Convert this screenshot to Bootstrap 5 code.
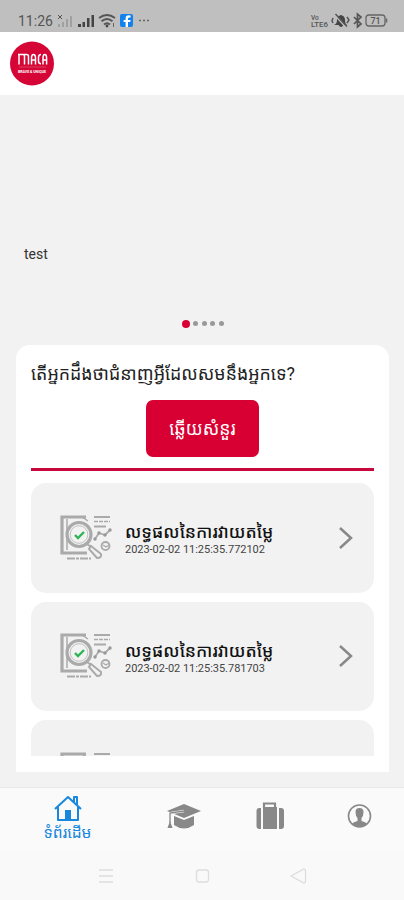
<!DOCTYPE html>
<html lang="km">
<head>
<meta charset="utf-8">
<meta name="viewport" content="width=device-width, initial-scale=1">
<title>MACA</title>
<link href="https://cdn.jsdelivr.net/npm/bootstrap@5.3.0/dist/css/bootstrap.min.css" rel="stylesheet">
<style>
body{background:#f2f2f2;font-family:Roboto,"Noto Sans Khmer","Khmer OS",sans-serif;color:#222;height:900px;overflow:hidden}
svg{display:block;flex:none}
.status{height:32px;background:#bfbfbf;padding:9px 16px 0 18px;color:#555}
.clock{font-size:14px;line-height:24px;width:35px;white-space:nowrap}
.topbar{height:63px;padding:9px 10px}
.slide{height:250px;padding:149px 24px 0}
.slide-text{font-size:14px;line-height:20px;color:#333}
.dots{margin-top:55px;gap:3.5px;height:9px;padding-left:1px}
.dots i{width:5px;height:5px;border-radius:50%;background:#999}
.dots i.on{width:8px;height:8px;background:#d80032}
.panel{margin:0 15px 0 16px;height:427px;border-radius:14px 14px 0 0;padding:0 15px}
.question{height:55px;line-height:57px;font-size:17.8px;white-space:nowrap;color:#222}
.answer{width:113px;height:57px;border-radius:7px;background:#d80032;border:0;color:#fff;font-size:17.8px;padding:2px 0 0;white-space:nowrap}
.answer:hover{background:#d80032;color:#fff}
.rule{height:3px;background:#c8083c;margin:11px 0 12px}
.results{height:273px;gap:9px}
.result{height:109.5px;flex:none;border-radius:15px;background:#f2f2f2;padding:0 20px 0 29px}
.result-title{font-size:17.4px;line-height:20px;color:#111;white-space:nowrap;font-weight:500}
.stamp{font-size:11px;line-height:12px;margin-top:2px;color:#444;white-space:nowrap;letter-spacing:-.03px}
.result-text{margin-left:13px;padding-top:3px}
.tabs{margin-top:15px;height:65px;background:#fafafa;border-top:1px solid #e9e9e9}
.tab-home{width:135px;color:#1888dc;padding-top:7px}
.tab-home span{font-size:15.6px;line-height:22px;white-space:nowrap}
.system{height:48px;background:#f9f9f9}
</style>
<script src="https://cdn.jsdelivr.net/npm/bootstrap@5.3.0/dist/js/bootstrap.bundle.min.js"></script>
</head>
<body>
<svg width="0" height="0" class="position-absolute">
<symbol id="report" viewBox="0 0 52 46">
<g fill="none" stroke="#aaa">
<path d="M26 2H2v36h25" stroke-width="3.200"/><path d="M7 4v31M22 2l6 4" stroke-width="1.500"/>
<circle cx="19" cy="19.500" r="12" stroke-width="3.200" fill="#f2f2f2"/><circle cx="19" cy="19.500" r="8.800" stroke-width=".7"/>
<path d="m27 29 4 3M31 31l10 8q1 4-4 4l-8-9z" stroke-width="2"/>
<path d="M34 2h16M34 11.500h12" stroke-width="1.800"/><path d="M34 6.500h16" stroke-width="1.300" stroke-dasharray="4 1"/>
<path d="m35 24 4-6 6 2 5-5" stroke-width="1.800"/><circle cx="45.500" cy="31" r="4" stroke-width="1.800"/><path d="m43 30 3 2 3-2" stroke-width="1.300"/>
<path d="M7 43.500h24" stroke-width="2" stroke-dasharray="8 1 3 1"/></g>
<g fill="#999"><circle cx="35" cy="24" r="1.700"/><circle cx="39" cy="18" r="1.700"/><circle cx="45" cy="20" r="1.700"/><circle cx="50" cy="15" r="1.700"/></g>
<path d="m15 20 3 3 6-6" fill="none" stroke="#2fb457" stroke-width="2.400"/>
</symbol>
<symbol id="next" viewBox="0 0 16 24"><path d="m2 2 11 10L2 22" fill="none" stroke="#888" stroke-width="2.500"/></symbol>
</svg>

<header>
<div class="status d-flex">
<span class="clock">11:26</span>
<svg class="ms-1" width="95" height="22" viewBox="57 9 95 22">
<g fill="#a0a0a0"><path d="M58 24h2v3h-2zM62 22h2v5h-2zM66 19h2v8h-2zM70 16h2v11h-2z"/></g><path d="m58 15 4 4m0-4-4 4" stroke="#555"/>
<path d="M78 24h3v3h-3zM82.500 22h2.500v5h-2.500zM87 18h2.500v9H87zM91.500 15h2.500v12h-2.500z" fill="#444"/>
<g fill="none" stroke="#555" stroke-width="2"><path d="M99 18q8-6 16 0M101.500 21.300q5.500-4.500 11 0M104 24.500q3-2.500 6 0"/></g><circle cx="107" cy="26" r="1.400" fill="#444"/><path d="M113.500 23v4" stroke="#666"/>
<rect x="120" y="14" width="13" height="13" rx="2" fill="#1482ee"/><path d="M128 27v-5h2.200l.4-2H128v-1.500q0-1.300 2.600-1v-2q-5-1-5 2.700V20h-2v2h2v5z" fill="#fff"/>
<path d="M139 20.500h2m2 0h2m2 0h2" stroke="#666" stroke-width="1.500"/>
</svg>
<svg class="ms-auto" width="78" height="22" viewBox="310 9 78 22">
<g font-family="Roboto" font-weight="500" fill="#555"><text x="311" y="19.500" font-size="6.500">Vo</text><text x="311" y="27.200" font-size="6.500" textLength="17" lengthAdjust="spacingAndGlyphs">LTE6</text><text x="370.500" y="23.700" font-size="9">71</text></g>
<path d="M334 25q3-1 3-5 0-4 4-5 4 1 4 5 0 4 2 5zM338.500 25h5q-2.500 4-5 0" fill="#444"/><path d="m334.500 15 12 13" stroke="#bfbfbf" stroke-width="1.500"/><path d="m335.500 14 11.500 12.500M333 18l-1 3 1 2M347 17l2 3-2 3" stroke="#555" stroke-width="1.500" fill="none"/>
<path d="m354 17 7 7-3.500 3V14l3.500 3-7 7" fill="none" stroke="#555" stroke-width="1.700"/>
<rect x="366" y="15" width="19" height="11" rx="3" fill="none" stroke="#666" stroke-width="1.300"/><path d="M386.500 18.500v4" stroke="#666" stroke-width="1.500"/>
</svg>
</div>
<div class="topbar bg-white">
<svg width="44" height="45" viewBox="0 0 44 45" role="img" aria-label="MACA"><circle cx="22" cy="22.500" r="22" fill="#d50635"/>
<g fill="none" stroke="#fff" stroke-width="1.500"><path d="M9 23.500V14M8 13.500h5q1.500 0 1.500 2v8M13 13.500h3.500q2 0 2 2v8M21.500 23.500V17q0-3.500 2-3.500t2 3.500v6.500M21.500 19h4M31 13.500q-2.500 0-2.500 3V20q0 2.800 2.500 2.800M33 23.500V17q0-3.500 1.800-3.500t1.800 3.500v6.500M33 19h3.600"/><path d="M9 26h27" stroke="#e7788e" stroke-width=".5"/></g>
<text x="8" y="31.500" fill="#fff" font-family="Roboto" font-weight="700" font-size="4.200" textLength="28" lengthAdjust="spacingAndGlyphs">BRAVE &amp; UNIQUE</text></svg>
</div>
</header>

<main>
<section class="slide">
<div class="slide-text">test</div>
<div class="dots d-flex justify-content-center align-items-center"><i class="on"></i><i></i><i></i><i></i><i></i></div>
</section>
<section class="panel bg-white">
<div class="question">តើអ្នកដឹងថាជំនាញអ្វីដែលសមនឹងអ្នកទេ?</div>
<button class="btn answer d-block mx-auto" type="button">ឆ្លើយសំនួរ</button>
<div class="rule"></div>
<div class="results d-flex flex-column overflow-hidden">
<div class="result d-flex align-items-center"><svg width="52" height="46"><use href="#report"/></svg><div class="result-text"><div class="result-title">លទ្ធផលនៃការវាយតម្លៃ</div><div class="stamp">2023-02-02 11:25:35.772102</div></div><svg class="ms-auto" width="16" height="24"><use href="#next"/></svg></div>
<div class="result d-flex align-items-center"><svg width="52" height="46"><use href="#report"/></svg><div class="result-text"><div class="result-title">លទ្ធផលនៃការវាយតម្លៃ</div><div class="stamp">2023-02-02 11:25:35.781703</div></div><svg class="ms-auto" width="16" height="24"><use href="#next"/></svg></div>
<div class="result d-flex align-items-center"><svg width="52" height="46"><use href="#report"/></svg></div>
</div>
</section>
</main>

<nav class="tabs d-flex">
<div class="tab-home d-flex flex-column align-items-center">
<svg width="28" height="27" viewBox="0 0 28 27"><path d="M1 14 14 2l13 12M4 12v13h20V12M20 7V2h3v8" fill="none" stroke="#1888dc" stroke-width="2" stroke-linejoin="round"/><path d="M11 15h6v10h-6z" fill="#1888dc"/></svg>
<span>ទំព័រដើម</span></div>
<svg width="98" height="60" viewBox="135 788 98 60"><path d="M167 811 184 804l17 7-17 7z" fill="#888"/><path d="M174 816v9q10 7 20 0v-9l-10 4z" fill="#888"/><path d="m184 811-13 2v13" fill="none" stroke="#fafafa" stroke-width="2.500"/><path d="m184 811-14 2v10" fill="none" stroke="#888" stroke-width="1.300"/><path d="m170 821 2.500 7h-5z" fill="#888"/></svg>
<svg width="76" height="60" viewBox="233 788 76 60"><path d="M264 808v-4.500h11v4.500" fill="none" stroke="#888" stroke-width="2.200"/><path d="M263 807h14v22h-14zM261 808v21h-1.500q-3 0-3-3v-15q0-3 3-3zM279 808v21h2q3 0 3-3v-15q0-3-3-3z" fill="#888"/></svg>
<svg width="95" height="60" viewBox="309 788 95 60"><circle cx="359.500" cy="816" r="11" fill="none" stroke="#888" stroke-width="1.600"/><path d="M355.500 812q0-4 4-4t4 4-2 6v3q4 1 6 3-8 5.500-16 0 2-2 6-3v-3q-2-2-2-6z" fill="#888"/></svg>
</nav>
<footer class="system">
<svg width="404" height="48" viewBox="0 852 404 48"><g fill="none" stroke="#ddd" stroke-width="1.300"><path d="M99 870h14M99 876h14M99 882h14"/><rect x="196.500" y="870" width="12" height="12" rx="2.500"/><path d="m291 876 13-7q1.500 0 1.500 2v10q0 2-1.500 2z"/></g></svg>
</footer>
</body>
</html>
